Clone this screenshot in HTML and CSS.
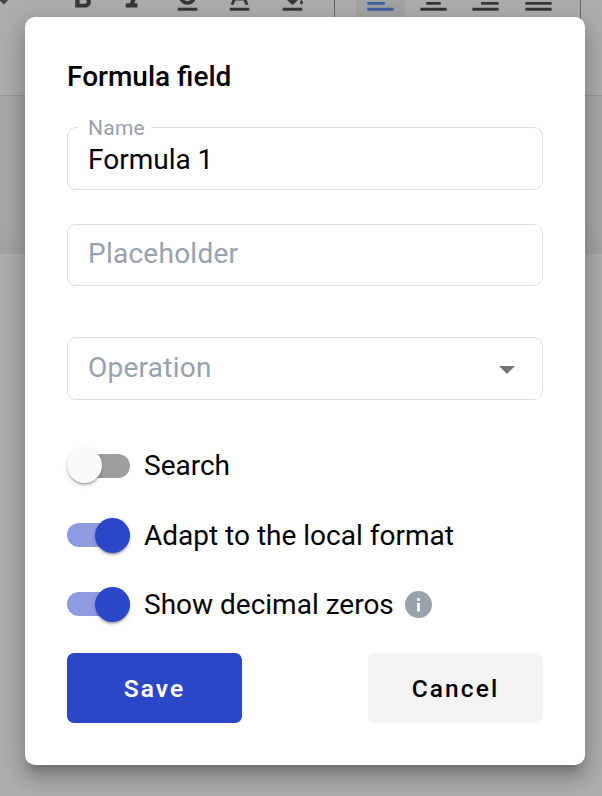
FILE: index.html
```html
<!DOCTYPE html>
<html lang="en">
<head>
<meta charset="utf-8">
<title>Formula field</title>
<link rel="stylesheet" href="styles.css">
</head>
<body>
<div class="editor">
  <div class="toolbar">
    <svg class="caret" viewBox="0 0 10 24"><path d="M-7 13h4l7 6.500 5-5.500v4l-5 5.500z"/></svg>
    <div class="tools">
      <div class="tool"><svg viewBox="0 0 24 24"><path d="M15.600 11.490c.97-.67 1.650-1.770 1.650-2.790 0-2.260-1.750-4-4-4H7v14.200h7.040c2.090 0 3.710-1.700 3.710-3.790 0-1.520-.86-2.820-2.150-3.420zM10 7.200h3c.83 0 1.500.67 1.500 1.500s-.67 1.500-1.500 1.500h-3zm3.500 9H10v-3h3.500c.83 0 1.500.67 1.500 1.500s-.67 1.500-1.500 1.500z"/></svg></div>
      <div class="tool"><svg viewBox="0 0 24 24"><path d="M10 4.700v3h2.210l-3.420 8.200H6v3h8v-3h-2.210l3.420-8.200H18v-3z"/></svg></div>
      <div class="tool"><svg viewBox="0 0 24 24"><path d="M12 17c3.310 0 6-2.690 6-6V3h-2.500v8c0 1.930-1.570 3.500-3.500 3.500S8.500 12.930 8.500 11V3H6v8c0 3.310 2.690 6 6 6zm-6.700 2v2h13.400v-2z"/></svg></div>
      <div class="tool"><svg viewBox="0 0 24 24"><path d="M5.300 19h13.400v2H5.300zM11 3L5.900 17H8l1.120-3h5.750L16 17h2.100L13 3zm-1.120 9L12 5.670 14.120 12z"/></svg></div>
      <div class="tool"><svg viewBox="0 0 24 24"><path d="M5.300 19h13.400v2H5.300zM7.300 12.800l4 3.900c.4.400 1 .4 1.400 0l4-3.900zM18.200 13.500s-1 1.300-1 2.200a1 1 0 0 0 2 0c0-.9-1-2.200-1-2.200z"/></svg></div>
    </div>
    <span class="divider"></span>
    <div class="tools">
      <div class="tool tool-active"><svg viewBox="0 0 24 24"><path d="M15 15H3v2h12zM15 7H3v2h12zM3 13h18v-2H3zm0 8h18v-2H3zM3 3v2h18V3z"/></svg></div>
      <div class="tool"><svg viewBox="0 0 24 24"><path d="M7 15v2h10v-2zm-4 6h18v-2H3zm0-8h18v-2H3zm4-6v2h10V7zM3 3v2h18V3z"/></svg></div>
      <div class="tool"><svg viewBox="0 0 24 24"><path d="M3 21h18v-2H3zm6-4h12v-2H9zm-6-4h18v-2H3zm6-4h12V7H9zM3 3v2h18V3z"/></svg></div>
      <div class="tool"><svg viewBox="0 0 24 24"><path d="M3 21h18v-2H3zm0-4h18v-2H3zm0-4h18v-2H3zm0-4h18V7H3zm0-6v2h18V3z"/></svg></div>
    </div>
    <span class="divider"></span>
  </div>
  <div class="canvas"></div>
  <div class="sheet"></div>
</div>

<div class="modal">
  <form class="dialog">
    <h1 class="title">Formula field</h1>
    <fieldset class="field field-named">
      <legend class="legend">Name</legend>
      <div class="value">Formula 1</div>
    </fieldset>
    <div class="field field-placeholder">Placeholder</div>
    <div class="field field-select">
      <span>Operation</span>
      <svg class="arrow" viewBox="0 0 16 8"><path d="M0 0h16L8 8z"/></svg>
    </div>
    <div class="switches">
      <div class="switch-row">
        <span class="switch"><span class="thumb"></span></span>
        <span>Search</span>
      </div>
      <div class="switch-row">
        <span class="switch switch-on"><span class="thumb"></span></span>
        <span>Adapt to the local format</span>
      </div>
      <div class="switch-row">
        <span class="switch switch-on"><span class="thumb"></span></span>
        <span>Show decimal zeros</span>
        <svg class="info" viewBox="0 0 27 27"><circle cx="13.500" cy="13.500" r="13.500"/><path d="M12.100 7h2.800v2.700h-2.800zM12.100 12h2.800v8.500h-2.800z"/></svg>
      </div>
    </div>
    <div class="actions">
      <button type="button" class="button button-primary">Save</button>
      <button type="button" class="button">Cancel</button>
    </div>
  </form>
</div>
</body>
</html>
```
FILE: styles.css
```css
* { box-sizing: border-box; }

body {
  margin: 0;
  height: 796px;
  overflow: hidden;
  background: #adadad;
  color: #000;
  font-family: Roboto, "Liberation Sans", sans-serif;
  font-size: 28px;
}

.editor { height: 796px; overflow: hidden; }

.toolbar {
  display: flex;
  height: 122px;
  margin-top: -26px;
  border-bottom: 1px solid #999;
  background: #adadad;
}

.caret { width: 10px; height: 24px; margin: 7px 47.800px 0 0; fill: #444; flex: none; }
.tools { display: flex; gap: 3.500px; }

.tool {
  display: flex;
  justify-content: center;
  width: 49px;
  height: 49px;
  padding-top: 6.400px;
}

.tool svg { width: 35px; height: 35px; fill: #363638; }
.tool-active { background: #a2a4a3; }
.tool-active svg { fill: #4160a8; }

.divider { width: 1px; height: 48px; margin: 0 21.500px 0 17.200px; background: #666770; }
.tools + .divider:last-child { margin-left: 17px; }

.canvas {
  height: 158px;
  background: linear-gradient(#a5a8a7 80%, #a0a3a2);
}

.sheet { height: 542px; background: #adadad; }

.modal {
  position: absolute;
  inset: 0;
  padding: 17px 17px 31px 25px;
}

.dialog {
  display: flex;
  flex-direction: column;
  width: 560px;
  height: 748px;
  padding: 42px;
  border-radius: 10px;
  background: #fff;
  box-shadow: 0 9px 9px -5px rgba(0, 0, 0, .2), 0 14px 18px 2px rgba(0, 0, 0, .14), 0 5px 25px 4px rgba(0, 0, 0, .12);
}

.title { margin: 0; font-size: 28px; font-weight: 500; line-height: 35px; }

.field {
  width: 476px;
  height: 63px;
  margin: 0;
  padding: 0 20px;
  border: 1px solid #dfdfdf;
  border-radius: 9px;
  color: #99a1aa;
  letter-spacing: .25px;
  line-height: 58px;
}

.field-named { height: 76px; margin-top: 20px; padding: 0 10px; }

.legend { padding: 2px 6px 0 10px; font-size: 21px; line-height: 25px; }

.value { padding-left: 10px; color: #000; letter-spacing: 0; line-height: 38px; }

.field-placeholder { height: 62px; margin-top: 34px; }

.field-select {
  display: flex;
  justify-content: space-between;
  align-items: center;
  margin-top: 51px;
  padding-bottom: 2px;
}

.arrow { width: 16px; height: 8px; margin: 4px 7px 0 0; fill: #757575; }

.switches { margin-top: 31px; }

.switch-row { display: flex; align-items: center; height: 69.400px; }

.switch {
  display: flex;
  align-items: center;
  width: 63px;
  height: 24px;
  margin-right: 14px;
  border-radius: 12px;
  background: #9e9e9e;
}

.thumb {
  width: 35px;
  height: 35px;
  border-radius: 50%;
  background: #fafafa;
  box-shadow: 0 3px 2px -2px rgba(0, 0, 0, .2), 0 2px 2px rgba(0, 0, 0, .14), 0 2px 5px rgba(0, 0, 0, .12);
}

.switch-on { justify-content: flex-end; background: #8e9be1; }
.switch-on .thumb { background: #2b46c6; }

.info { width: 27px; height: 27px; margin-left: 11px; fill: #99a1aa; }
.info path { fill: #fff; }

.actions { display: flex; justify-content: space-between; margin-top: auto; }

.button {
  width: 175px;
  height: 70px;
  padding: 0;
  border: 0;
  border-radius: 7px;
  background: #f3f4f6;
  color: #000;
  font: 500 24.500px Roboto, "Liberation Sans", sans-serif;
  letter-spacing: 2.100px;
}

.button-primary { background: #2b46c6; color: #fff; font-weight: 600; }
```
